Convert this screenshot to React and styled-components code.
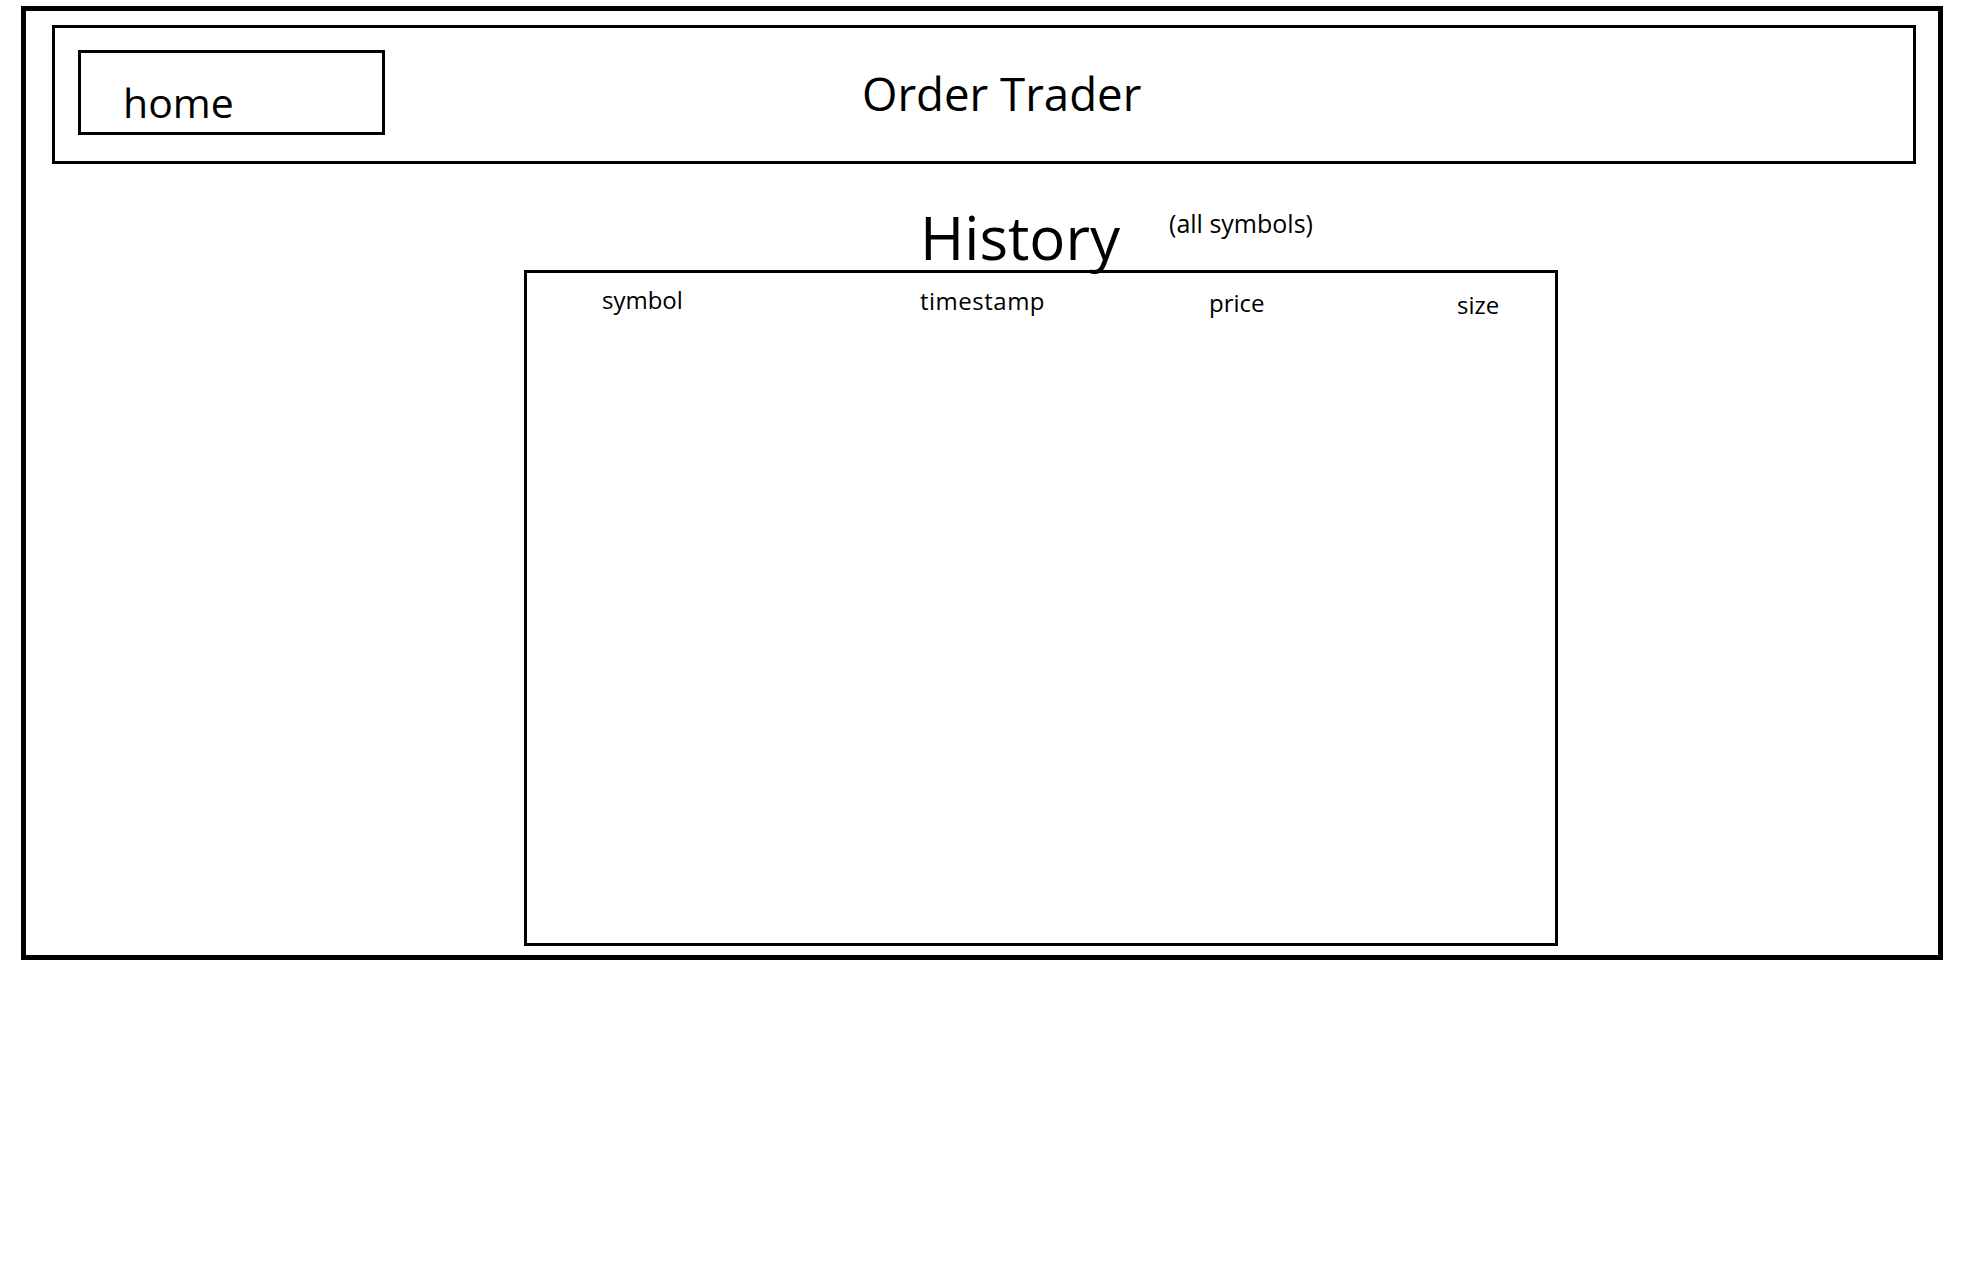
import React from "react";
import styled, { createGlobalStyle } from "styled-components";

const GlobalStyle = createGlobalStyle`
  html, body {
    margin: 0;
    padding: 0;
    background: #ffffff;
  }
  body {
    font-family: "Open Sans", "Noto Sans", Arial, sans-serif;
    color: #000;
  }
  * { box-sizing: border-box; }
`;

const Frame = styled.div`
  margin: 6px 0 0 21px;
  width: 1922px;
  height: 954px;
  border: 5px solid #000;
  display: flex;
  flex-direction: column;
  padding: 14px 22px 9px 26px;
`;

const Header = styled.header`
  height: 139px;
  border: 3px solid #000;
  display: flex;
  align-items: flex-start;
  padding-left: 23px;
`;

const HomeButton = styled.div`
  margin-top: 22px;
  width: 307px;
  height: 85px;
  border: 3px solid #000;
  padding: 21px 0 0 42px;
  font-size: 41px;
  line-height: normal;
  white-space: nowrap;
`;

const AppTitle = styled.h1`
  margin: 34px 0 0 477px;
  font-size: 45.6px;
  font-weight: 400;
  line-height: normal;
  white-space: nowrap;
`;

const HeadingRow = styled.div`
  height: 106px;
  display: flex;
  align-items: flex-start;
  padding-left: 868px;
  overflow: visible;
`;

const SectionTitle = styled.h2`
  margin: 32px 0 0 0;
  font-size: 60px;
  font-weight: 400;
  line-height: normal;
  white-space: nowrap;
`;

const SectionNote = styled.span`
  margin: 42px 0 0 49px;
  font-size: 25px;
  line-height: normal;
  white-space: nowrap;
`;

const Table = styled.div`
  margin-left: 472px;
  width: 1034px;
  height: 676px;
  border: 3px solid #000;
`;

const HeadRow = styled.div`
  display: grid;
  grid-template-columns: 318px 289px 248px auto;
  padding: 10px 0 0 75px;
`;

const HeadCell = styled.div`
  padding-top: ${(p) => p.$drop || 0}px;
  font-size: 24px;
  letter-spacing: ${(p) => p.$spacing || 0}px;
  line-height: normal;
  white-space: nowrap;
`;

const columns = [
  { label: "symbol", drop: 0, spacing: 0 },
  { label: "timestamp", drop: 1, spacing: 0.5 },
  { label: "price", drop: 3, spacing: 0 },
  { label: "size", drop: 5, spacing: 0 },
];

export default function App() {
  return (
    <>
      <GlobalStyle />
      <Frame>
        <Header>
          <HomeButton>home</HomeButton>
          <AppTitle>Order Trader</AppTitle>
        </Header>
        <HeadingRow>
          <SectionTitle>History</SectionTitle>
          <SectionNote>(all symbols)</SectionNote>
        </HeadingRow>
        <Table>
          <HeadRow>
            {columns.map((c) => (
              <HeadCell key={c.label} $drop={c.drop} $spacing={c.spacing}>
                {c.label}
              </HeadCell>
            ))}
          </HeadRow>
        </Table>
      </Frame>
    </>
  );
}
